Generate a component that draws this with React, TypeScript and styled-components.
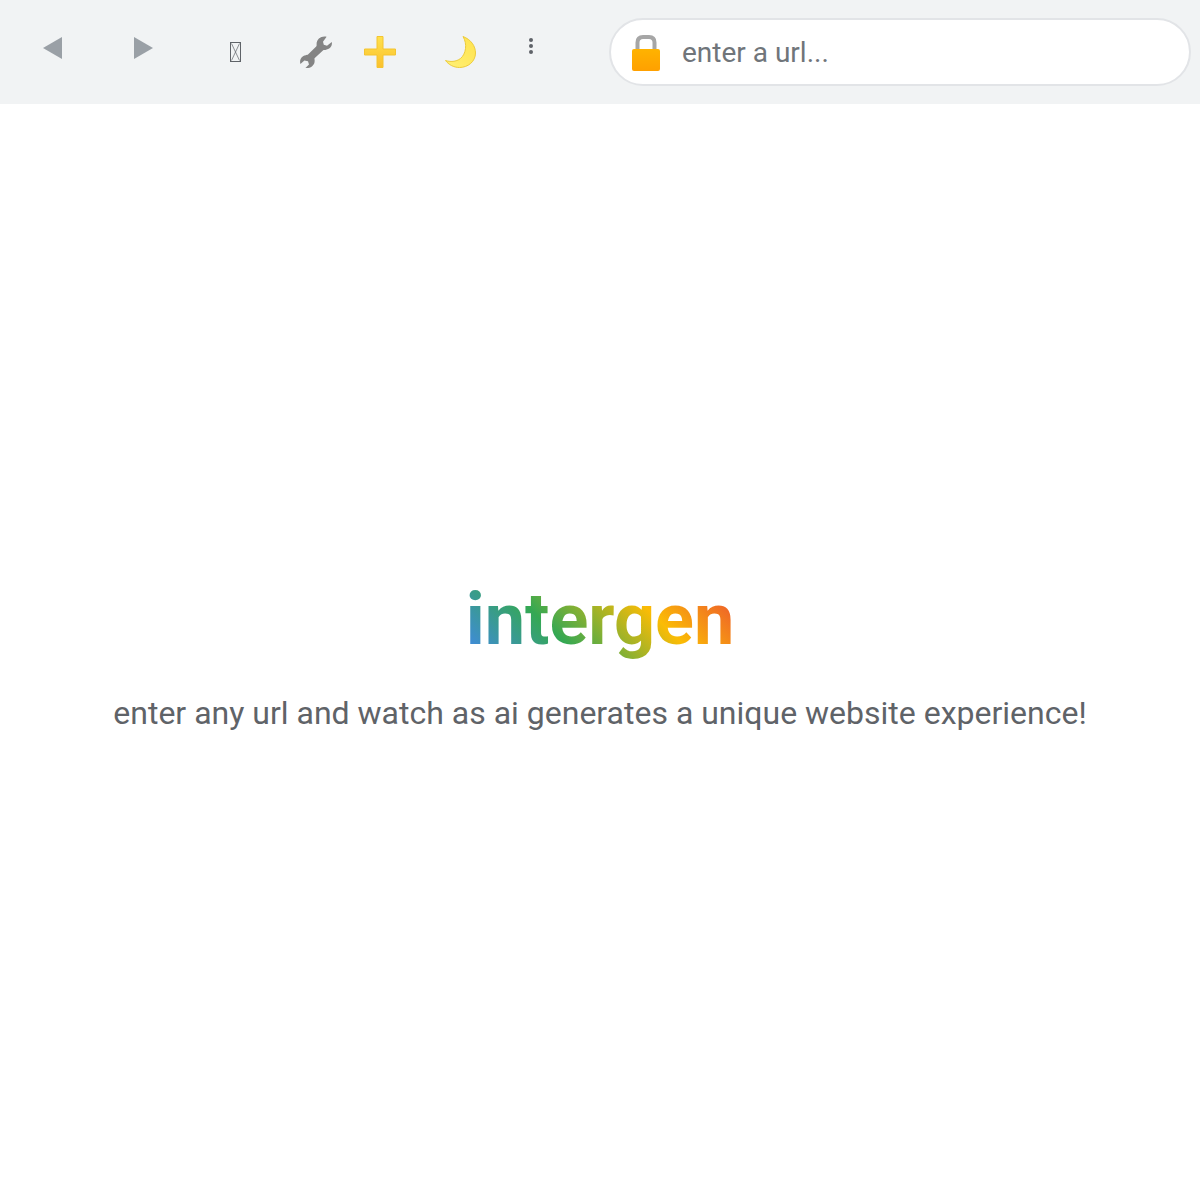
import styled, { createGlobalStyle } from 'styled-components';

const GlobalStyle = createGlobalStyle`
  html, body {
    margin: 0;
    padding: 0;
    background: #fff;
    font-family: Roboto, "Noto Sans", sans-serif;
  }
`;

const Page = styled.div`
  display: flex;
  flex-direction: column;
  height: 100vh;
  overflow: hidden;
`;

const Toolbar = styled.header`
  display: flex;
  align-items: center;
  flex-shrink: 0;
  height: 104px;
  padding: 0 9px 0 8px;
  box-sizing: border-box;
  background: #f1f3f4;
`;

const ToolButton = styled.button<{ $width: number; $lift?: number }>`
  display: flex;
  align-items: center;
  justify-content: center;
  flex-shrink: 0;
  width: ${(p) => p.$width}px;
  padding: 0;
  margin-bottom: ${(p) => p.$lift ?? 0}px;
  border: 0;
  background: none;
`;

const UrlBar = styled.div`
  display: flex;
  align-items: center;
  gap: 21px;
  flex: 1;
  height: 68px;
  margin-left: 59px;
  padding: 0 20px;
  box-sizing: border-box;
  background: #fff;
  border: 2px solid #e2e4e7;
  border-radius: 34px;
`;

const UrlInput = styled.input`
  flex: 1;
  min-width: 0;
  padding: 0;
  border: 0;
  outline: 0;
  background: none;
  font-family: Roboto, sans-serif;
  font-size: 28px;
  color: #202124;

  &::placeholder {
    color: #70757a;
    opacity: 1;
  }
`;

const Main = styled.main`
  display: flex;
  flex: 1;
  flex-direction: column;
  align-items: center;
  justify-content: center;
  padding-top: 11px;
`;

const Logo = styled.h1`
  margin: 0 0 27px;
  font-family: Roboto, sans-serif;
  font-size: 72px;
  font-weight: 700;
  line-height: 84px;
  background: linear-gradient(45deg, #4285f4, #34a853, #fbbc05, #ea4335);
  -webkit-background-clip: text;
  background-clip: text;
  color: transparent;
`;

const Tagline = styled.p`
  margin: 0;
  font-family: Roboto, sans-serif;
  font-size: 32px;
  line-height: 48px;
  color: #5f6368;
`;

function Triangle({ flip }: { flip?: boolean }) {
  return (
    <svg width="20" height="22" viewBox="0 0 20 22">
      <path d={flip ? 'M1 0 L20 11 L1 22 Z' : 'M20 0 L1 11 L20 22 Z'} fill="#9aa0a6" />
    </svg>
  );
}

function MissingGlyph() {
  return (
    <svg width="11" height="20" viewBox="0 0 11 20" fill="none" stroke="#5f6368" strokeWidth="1">
      <rect x="0.5" y="0.5" width="10" height="19" />
      <path d="M1.5 1.5 L9.5 18.5 M9.5 1.5 L1.5 18.5" strokeWidth="0.7" />
    </svg>
  );
}

function WrenchIcon() {
  return (
    <svg width="32" height="32" viewBox="0 0 32 32">
      <path
        d="M31.8 6 L27 9.8 L23.8 8.8 L23 5.8 L26.6 0.8 C21.4 -0.4 16.4 3 16.6 8.4 C16.6 9.4 16.8 9.8 16.2 10.4 L8 18.6 C7.4 19.2 6.8 19 5.8 19.2 C1.4 19.8 -0.8 24 0.4 28 L4.4 24.4 L8 25.2 L9 28.4 L5.4 32 C10.8 32.8 15.2 29 14.6 23.8 C14.5 23 14.3 22.6 14.8 22.1 L23.2 14.2 C23.8 13.7 24.4 14 25.4 13.9 C29.8 13.4 32.6 10 31.8 6 Z"
        fill="#848484"
      />
    </svg>
  );
}

function PlusIcon() {
  return (
    <svg width="32" height="32" viewBox="0 0 32 32">
      <defs>
        <linearGradient id="plusFill" x1="0" y1="0" x2="0" y2="1">
          <stop offset="0" stopColor="#ffe14d" />
          <stop offset="1" stopColor="#fbc02d" />
        </linearGradient>
      </defs>
      <path
        d="M13 0.5 H19 V13 H31.5 V19 H19 V31.5 H13 V19 H0.5 V13 H13 Z"
        fill="url(#plusFill)"
        stroke="#f4c430"
        strokeWidth="1"
      />
    </svg>
  );
}

function MoonIcon() {
  return (
    <svg width="31" height="32" viewBox="0 0 31 32">
      <defs>
        <linearGradient id="moonFill" x1="0" y1="1" x2="1" y2="0">
          <stop offset="0" stopColor="#fff176" />
          <stop offset="1" stopColor="#ffe24d" />
        </linearGradient>
      </defs>
      <path
        d="M18 0.5 C26 3.5 30.5 10 30.5 17 C30.5 25.5 23 31.5 14.5 31.5 C8.5 31.5 3.5 28.5 0.5 24.5 C5 26 11 26 15.5 22.5 C21 18 22.5 8 18 0.5 Z"
        fill="url(#moonFill)"
        stroke="#eccb3c"
        strokeWidth="1"
      />
    </svg>
  );
}

function MoreIcon() {
  return (
    <svg width="6" height="18" viewBox="0 0 6 18" fill="#5f6368">
      <circle cx="3" cy="3" r="2" />
      <circle cx="3" cy="9" r="2" />
      <circle cx="3" cy="15" r="2" />
    </svg>
  );
}

function LockIcon() {
  return (
    <svg width="30" height="38" viewBox="0 0 30 38" style={{ flexShrink: 0 }}>
      <defs>
        <linearGradient id="lockFill" x1="0" y1="0" x2="0" y2="1">
          <stop offset="0" stopColor="#ffb300" />
          <stop offset="1" stopColor="#ffa000" />
        </linearGradient>
      </defs>
      <path d="M6.5 18 V9.5 C6.5 5.5 9 4 12 4 H18 C21 4 23.5 5.5 23.5 9.5 V18" fill="none" stroke="#a6a6a6" strokeWidth="4" />
      <rect x="1" y="16" width="28" height="22" rx="2" fill="url(#lockFill)" />
    </svg>
  );
}

export default function App() {
  return (
    <Page>
      <GlobalStyle />
      <Toolbar>
        <ToolButton $width={88} $lift={8}>
          <Triangle />
        </ToolButton>
        <ToolButton $width={94} $lift={8}>
          <Triangle flip />
        </ToolButton>
        <ToolButton $width={90}>
          <MissingGlyph />
        </ToolButton>
        <ToolButton $width={72}>
          <WrenchIcon />
        </ToolButton>
        <ToolButton $width={56}>
          <PlusIcon />
        </ToolButton>
        <ToolButton $width={104}>
          <MoonIcon />
        </ToolButton>
        <ToolButton $width={38} $lift={12}>
          <MoreIcon />
        </ToolButton>
        <UrlBar>
          <LockIcon />
          <UrlInput placeholder="enter a url..." />
        </UrlBar>
      </Toolbar>
      <Main>
        <Logo>intergen</Logo>
        <Tagline>enter any url and watch as ai generates a unique website experience!</Tagline>
      </Main>
    </Page>
  );
}
